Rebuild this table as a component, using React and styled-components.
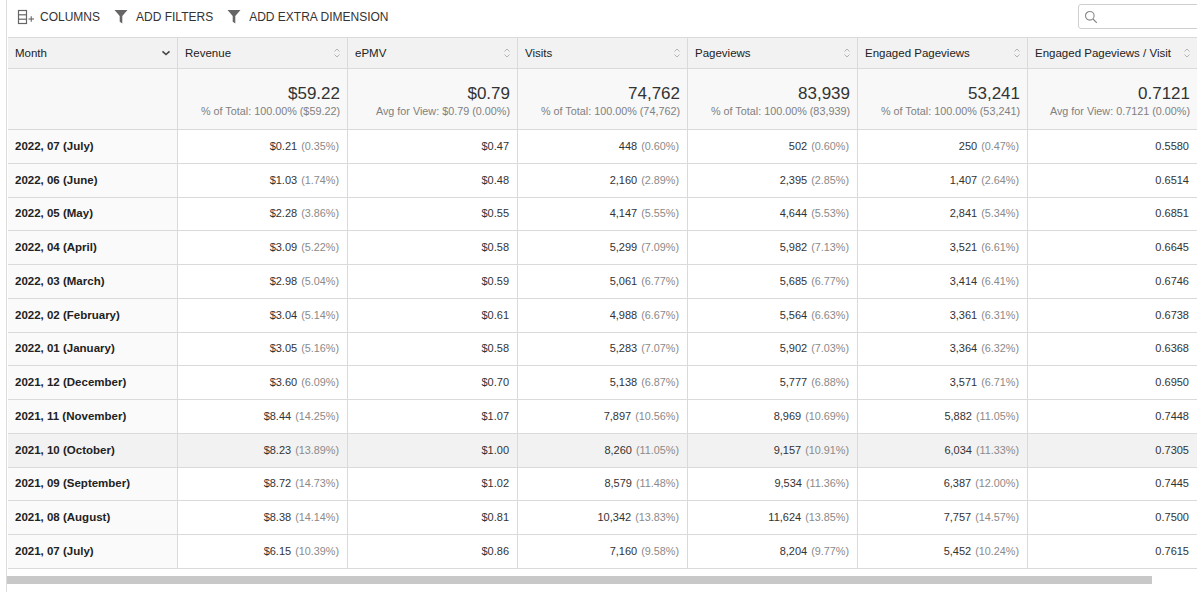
import React from "react";
import styled, { createGlobalStyle } from "styled-components";

const Global = createGlobalStyle`
  html, body { margin: 0; padding: 0; background: #fff; }
  body { font-family: "Liberation Sans", Arial, sans-serif; color: #333; overflow: hidden; }
  * { box-sizing: border-box; }
`;

const Page = styled.div`
  width: 1191px;
  height: 592px;
  border-left: 1px solid #dcdcdc;
  margin-left: 6px;
  display: flex;
  flex-direction: column;
  overflow: hidden;
`;

const Toolbar = styled.div`
  height: 37px;
  display: flex;
  align-items: center;
  padding-left: 10px;
  padding-bottom: 4px;
`;

const ToolButton = styled.div`
  display: flex;
  align-items: center;
  gap: ${p => p.$gap || 6}px;
  font-size: 12px;
  color: #333;
  margin-right: ${p => p.$mr || 14}px;
  text-transform: uppercase;
  white-space: nowrap;
`;

const Spacer = styled.div`flex: 1;`;

const Search = styled.div`
  width: 130px;
  height: 25px;
  border: 1px solid #cfcfcf;
  border-radius: 3px;
  display: flex;
  align-items: center;
  padding-left: 5px;
  margin-right: -11px;
`;

const Table = styled.div`
  display: grid;
  grid-template-columns: repeat(7, 170px);
  width: 1191px;
  padding-left: 1px;
`;

const HeadCell = styled.div`
  height: 32px;
  background: #f2f2f2;
  border-top: 1px solid #dadada;
  border-bottom: 1px solid #dadada;
  border-right: 1px solid #dadada;
  display: flex;
  align-items: center;
  justify-content: space-between;
  padding: 0 6px 1px 7px;
  font-size: 11.5px;
  color: #222;
  white-space: nowrap;
`;

const TotalCell = styled.div`
  height: 61px;
  background: #f8f8f8;
  border-bottom: 1px solid #dadada;
  border-right: 1px solid #dadada;
  display: flex;
  flex-direction: column;
  align-items: flex-end;
  justify-content: center;
  padding: 3px 7px 0 7px;
`;

const TotalValue = styled.div`
  font-size: 17px;
  color: #333;
  line-height: 20px;
`;

const TotalSub = styled.div`
  font-size: 10.8px;
  color: #808080;
  line-height: 14px;
  white-space: nowrap;
`;

const Cell = styled.div`
  height: 33.75px;
  border-bottom: 1px solid #dadada;
  border-right: 1px solid #dadada;
  background: ${p => (p.$hover ? "#f2f2f2" : p.$first ? "#fafafa" : "#fff")};
  display: flex;
  align-items: center;
  justify-content: ${p => (p.$first ? "flex-start" : "flex-end")};
  padding: 0 8px 1px 7px;
  font-size: ${p => (p.$first ? 11.5 : 11)}px;
  color: ${p => (p.$first ? "#222" : "#333")};
  font-weight: ${p => (p.$first ? 700 : 400)};
  white-space: nowrap;
`;

const Pct = styled.span`
  color: #8a8a8a;
  font-size: 10.8px;
  margin-left: 4px;
`;

const ScrollTrack = styled.div`
  margin-top: 7px;
  height: 8px;
  width: 1190px;
`;

const ScrollThumb = styled.div`
  height: 8px;
  width: 1145px;
  background: #c8c8c8;
`;

const ColumnsIcon = () => (
  <svg width="20" height="16" viewBox="0 0 20 16">
    <rect x="1.5" y="1.5" width="8" height="13" fill="none" stroke="#666" strokeWidth="1.2" />
    <line x1="1.5" y1="5.8" x2="9.5" y2="5.8" stroke="#666" strokeWidth="1.2" />
    <line x1="1.5" y1="10.2" x2="9.5" y2="10.2" stroke="#666" strokeWidth="1.2" />
    <line x1="11.5" y1="10" x2="17" y2="10" stroke="#666" strokeWidth="1.1" />
    <line x1="14.25" y1="7.2" x2="14.25" y2="12.8" stroke="#666" strokeWidth="1.1" />
  </svg>
);

const FunnelIcon = () => (
  <svg width="14" height="15" viewBox="0 0 14 15">
    <path d="M0.5 1 H13.5 L8.3 7 V14.5 L5.7 12.8 V7 Z" fill="#666" />
  </svg>
);

const SearchIcon = () => (
  <svg width="14" height="14" viewBox="0 0 14 14">
    <circle cx="5.8" cy="5.8" r="4.3" fill="none" stroke="#888" strokeWidth="1.1" />
    <line x1="9" y1="9" x2="12.8" y2="12.8" stroke="#888" strokeWidth="1.2" />
  </svg>
);

const SortIcon = () => (
  <svg width="8" height="12" viewBox="0 0 8 12">
    <path d="M1.5 4.5 L4 2 L6.5 4.5" fill="none" stroke="#b5b5b5" strokeWidth="1" />
    <path d="M1.5 7.5 L4 10 L6.5 7.5" fill="none" stroke="#b5b5b5" strokeWidth="1" />
  </svg>
);

const ChevronDown = () => (
  <svg width="10" height="8" viewBox="0 0 10 8">
    <path d="M1.5 2.3 L5 5.5 L8.5 2.3" fill="none" stroke="#444" strokeWidth="1.6" />
  </svg>
);

const headers = [
  "Revenue",
  "ePMV",
  "Visits",
  "Pageviews",
  "Engaged Pageviews",
  "Engaged Pageviews / Visit",
];

const totals = [
  ["$59.22", "% of Total: 100.00% ($59.22)"],
  ["$0.79", "Avg for View: $0.79 (0.00%)"],
  ["74,762", "% of Total: 100.00% (74,762)"],
  ["83,939", "% of Total: 100.00% (83,939)"],
  ["53,241", "% of Total: 100.00% (53,241)"],
  ["0.7121", "Avg for View: 0.7121 (0.00%)"],
];

const rows = [
  ["2022, 07 (July)", ["$0.21", "0.35%"], ["$0.47"], ["448", "0.60%"], ["502", "0.60%"], ["250", "0.47%"], ["0.5580"]],
  ["2022, 06 (June)", ["$1.03", "1.74%"], ["$0.48"], ["2,160", "2.89%"], ["2,395", "2.85%"], ["1,407", "2.64%"], ["0.6514"]],
  ["2022, 05 (May)", ["$2.28", "3.86%"], ["$0.55"], ["4,147", "5.55%"], ["4,644", "5.53%"], ["2,841", "5.34%"], ["0.6851"]],
  ["2022, 04 (April)", ["$3.09", "5.22%"], ["$0.58"], ["5,299", "7.09%"], ["5,982", "7.13%"], ["3,521", "6.61%"], ["0.6645"]],
  ["2022, 03 (March)", ["$2.98", "5.04%"], ["$0.59"], ["5,061", "6.77%"], ["5,685", "6.77%"], ["3,414", "6.41%"], ["0.6746"]],
  ["2022, 02 (February)", ["$3.04", "5.14%"], ["$0.61"], ["4,988", "6.67%"], ["5,564", "6.63%"], ["3,361", "6.31%"], ["0.6738"]],
  ["2022, 01 (January)", ["$3.05", "5.16%"], ["$0.58"], ["5,283", "7.07%"], ["5,902", "7.03%"], ["3,364", "6.32%"], ["0.6368"]],
  ["2021, 12 (December)", ["$3.60", "6.09%"], ["$0.70"], ["5,138", "6.87%"], ["5,777", "6.88%"], ["3,571", "6.71%"], ["0.6950"]],
  ["2021, 11 (November)", ["$8.44", "14.25%"], ["$1.07"], ["7,897", "10.56%"], ["8,969", "10.69%"], ["5,882", "11.05%"], ["0.7448"]],
  ["2021, 10 (October)", ["$8.23", "13.89%"], ["$1.00"], ["8,260", "11.05%"], ["9,157", "10.91%"], ["6,034", "11.33%"], ["0.7305"]],
  ["2021, 09 (September)", ["$8.72", "14.73%"], ["$1.02"], ["8,579", "11.48%"], ["9,534", "11.36%"], ["6,387", "12.00%"], ["0.7445"]],
  ["2021, 08 (August)", ["$8.38", "14.14%"], ["$0.81"], ["10,342", "13.83%"], ["11,624", "13.85%"], ["7,757", "14.57%"], ["0.7500"]],
  ["2021, 07 (July)", ["$6.15", "10.39%"], ["$0.86"], ["7,160", "9.58%"], ["8,204", "9.77%"], ["5,452", "10.24%"], ["0.7615"]],
];

export default function App() {
  return (
    <>
      <Global />
      <Page>
        <Toolbar>
          <ToolButton $gap={3} $mr={14}>
            <ColumnsIcon />
            Columns
          </ToolButton>
          <ToolButton $gap={8} $mr={14}>
            <FunnelIcon />
            Add Filters
          </ToolButton>
          <ToolButton $gap={8}>
            <FunnelIcon />
            Add Extra Dimension
          </ToolButton>
          <Spacer />
          <Search>
            <SearchIcon />
          </Search>
        </Toolbar>
        <Table>
          <HeadCell>
            <span>Month</span>
            <ChevronDown />
          </HeadCell>
          {headers.map(h => (
            <HeadCell key={h}>
              <span>{h}</span>
              <SortIcon />
            </HeadCell>
          ))}
          <TotalCell />
          {totals.map(([v, s]) => (
            <TotalCell key={s + v}>
              <TotalValue>{v}</TotalValue>
              <TotalSub>{s}</TotalSub>
            </TotalCell>
          ))}
          {rows.map((r, i) => {
            const hover = i === 9;
            return (
              <React.Fragment key={r[0]}>
                <Cell $first $hover={hover}>{r[0]}</Cell>
                {r.slice(1).map(([v, p], j) => (
                  <Cell key={j} $hover={hover}>
                    {v}
                    {p && <Pct>({p})</Pct>}
                  </Cell>
                ))}
              </React.Fragment>
            );
          })}
        </Table>
        <ScrollTrack>
          <ScrollThumb />
        </ScrollTrack>
      </Page>
    </>
  );
}
